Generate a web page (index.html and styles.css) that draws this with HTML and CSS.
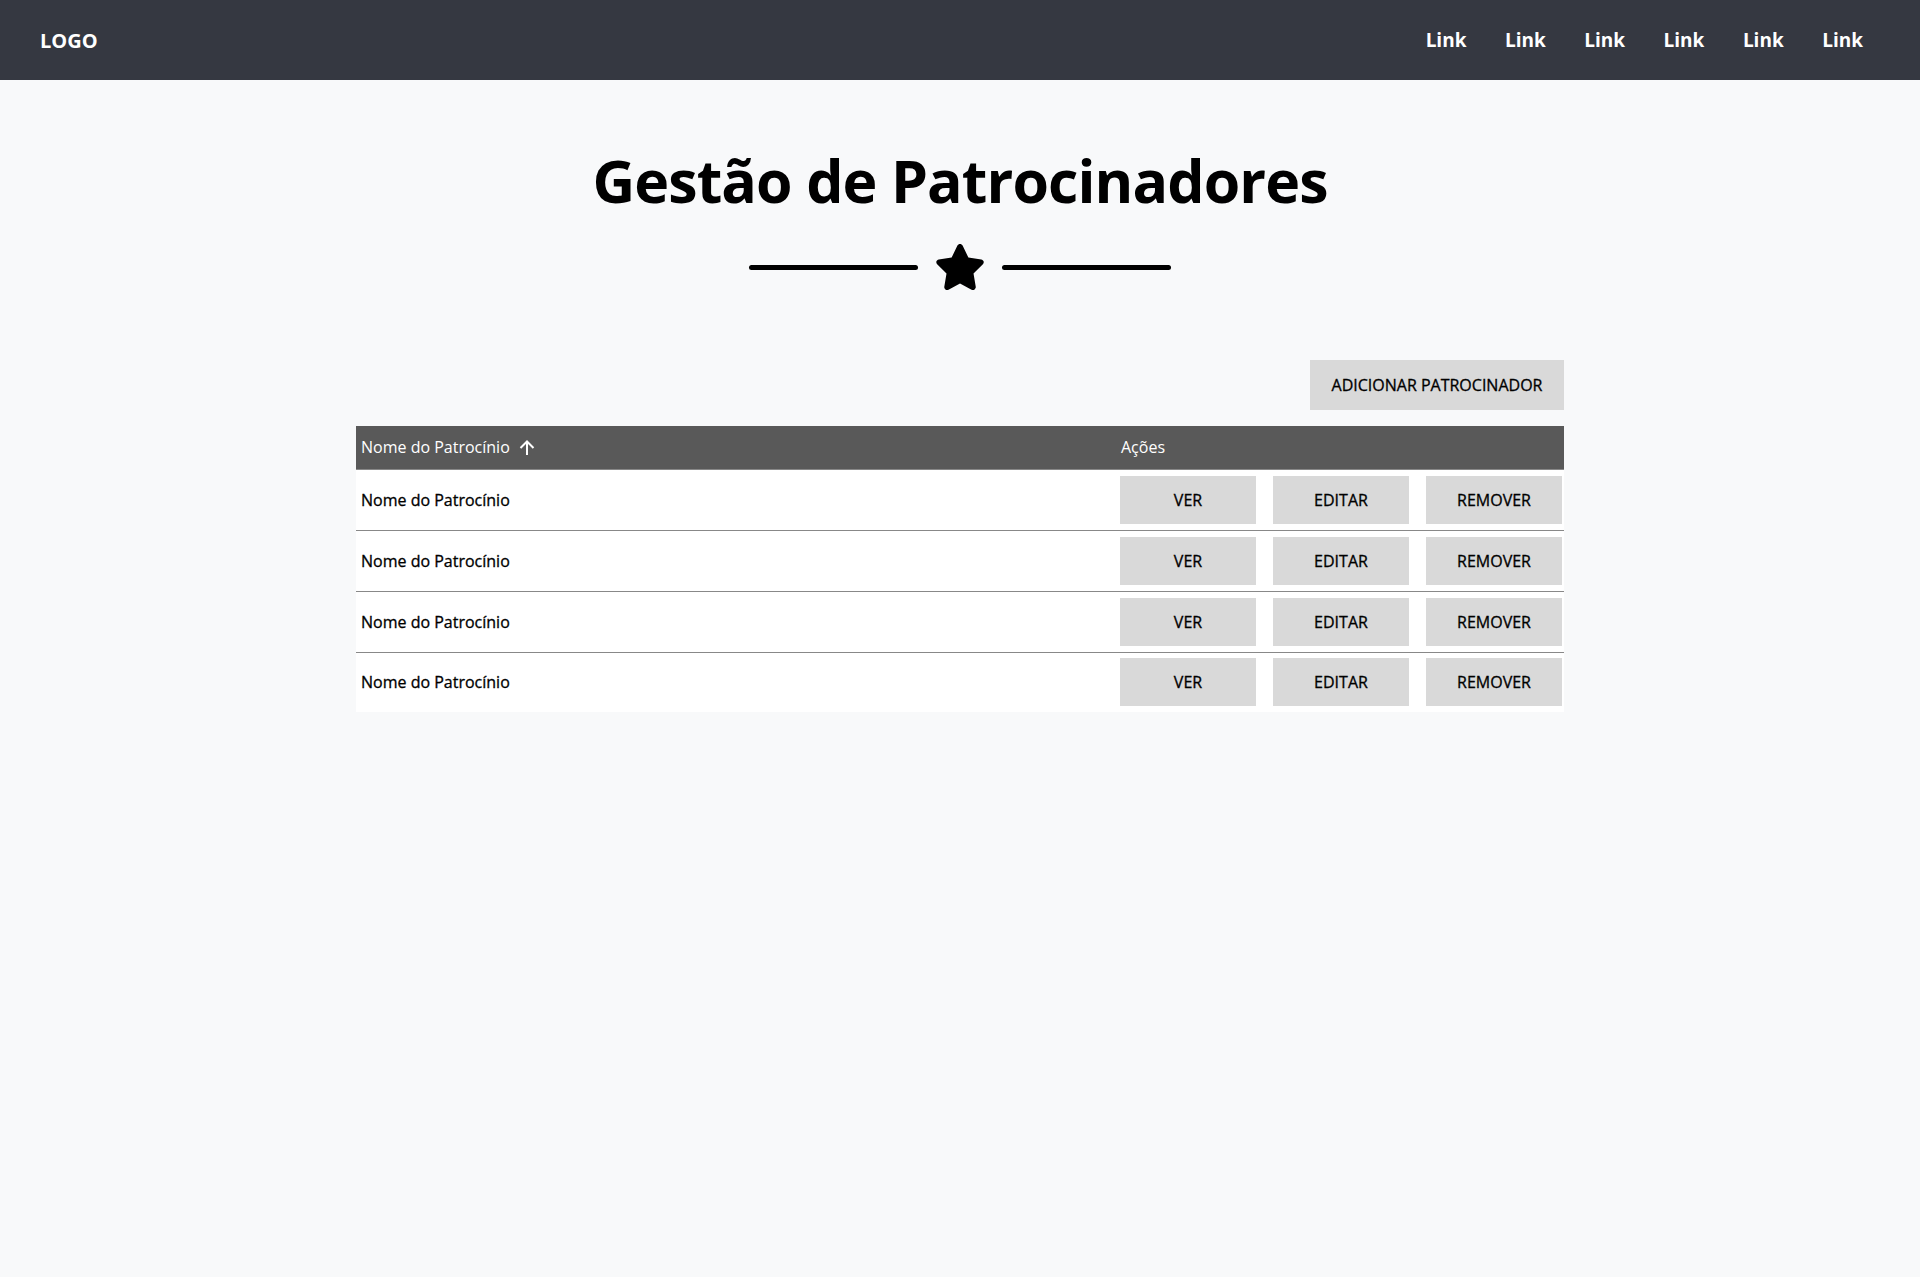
FILE: index.html
```html
<!DOCTYPE html>
<html lang="pt">
<head>
<meta charset="utf-8">
<title>Gestão de Patrocinadores</title>
<link rel="stylesheet" href="styles.css">
</head>
<body>
<nav class="navbar">
  <a class="logo" href="#">LOGO</a>
  <ul class="nav-links">
    <li><a href="#">Link</a></li>
    <li><a href="#">Link</a></li>
    <li><a href="#">Link</a></li>
    <li><a href="#">Link</a></li>
    <li><a href="#">Link</a></li>
    <li><a href="#">Link</a></li>
  </ul>
</nav>
<main class="content">
  <h1 class="title">Gestão de Patrocinadores</h1>
  <div class="divider">
    <span class="divider-line"></span>
    <svg class="star" viewBox="0 0 576 512" width="52" height="46" aria-hidden="true"><path d="M316.9 18C311.6 7 300.4 0 288.1 0s-23.4 7-28.8 18L195 150.3 51.4 171.5c-12 1.8-22 10.2-25.7 21.7s-.7 24.2 7.9 32.7L137.8 329 113.2 474.7c-2 12 3 24.2 12.9 31.3s23 8 33.8 2.3l128.3-68.5 128.3 68.5c10.8 5.7 23.9 4.9 33.8-2.3s14.9-19.3 12.9-31.3L438.5 329 542.7 225.9c8.6-8.5 11.7-21.2 7.9-32.7s-13.7-19.9-25.7-21.7L381.2 150.3 316.9 18z"/></svg>
    <span class="divider-line"></span>
  </div>
  <section class="panel">
    <div class="toolbar">
      <button class="btn btn-add">ADICIONAR PATROCINADOR</button>
    </div>
    <table class="sponsors">
      <thead>
        <tr>
          <th class="col-name"><span class="th-inner">Nome do Patrocínio
            <svg class="sort-icon" viewBox="0 0 16 15" width="16" height="15" aria-hidden="true"><path d="M8 15V1.5M1.5 8L8 1.5 14.5 8" fill="none" stroke="#fff" stroke-width="2"/></svg></span></th>
          <th class="col-actions">Ações</th>
        </tr>
      </thead>
      <tbody>
        <tr>
          <td class="name">Nome do Patrocínio</td>
          <td class="actions"><div class="action-group"><button class="btn">VER</button><button class="btn">EDITAR</button><button class="btn">REMOVER</button></div></td>
        </tr>
        <tr>
          <td class="name">Nome do Patrocínio</td>
          <td class="actions"><div class="action-group"><button class="btn">VER</button><button class="btn">EDITAR</button><button class="btn">REMOVER</button></div></td>
        </tr>
        <tr>
          <td class="name">Nome do Patrocínio</td>
          <td class="actions"><div class="action-group"><button class="btn">VER</button><button class="btn">EDITAR</button><button class="btn">REMOVER</button></div></td>
        </tr>
        <tr>
          <td class="name">Nome do Patrocínio</td>
          <td class="actions"><div class="action-group"><button class="btn">VER</button><button class="btn">EDITAR</button><button class="btn">REMOVER</button></div></td>
        </tr>
      </tbody>
    </table>
  </section>
</main>
</body>
</html>
```

FILE: styles.css
```css
* { box-sizing: border-box; }
html, body { margin: 0; padding: 0; }
body {
  background: #f8f9fa;
  font-family: "Open Sans", "Noto Sans", "DejaVu Sans", sans-serif;
  color: #000;
}
.navbar {
  height: 80px;
  background: #353841;
  display: flex;
  align-items: center;
  justify-content: space-between;
  padding: 0 57px 0 40px;
}
.logo {
  color: #fff;
  text-decoration: none;
  font-weight: 700;
  font-size: 20px;
}
.nav-links {
  list-style: none;
  margin: 0;
  padding: 0;
  display: flex;
  gap: 38.5px;
}
.nav-links a {
  color: #fff;
  text-decoration: none;
  font-weight: 700;
  font-size: 19px;
}
.content {
  display: flex;
  flex-direction: column;
  align-items: center;
}
.title {
  margin: 60px 0 0;
  font-size: 59px;
  line-height: 80px;
  font-weight: 700;
  letter-spacing: -0.9px;
}
.divider {
  margin-top: 24px;
  display: flex;
  align-items: center;
  gap: 16px;
}
.divider-line {
  width: 169px;
  height: 5px;
  border-radius: 3px;
  background: #000;
}
.star { display: block; }
.panel {
  width: 1208px;
  margin-top: 70px;
}
.toolbar {
  display: flex;
  justify-content: flex-end;
  margin-bottom: 16px;
}
.btn {
  border: none;
  background: #d9d9d9;
  font-family: inherit;
  font-size: 16px;
  font-weight: 500;
  -webkit-text-stroke: 0.3px #000;
  color: #000;
  cursor: pointer;
  padding: 0;
}
.btn-add {
  width: 254px;
  height: 50px;
}
.sponsors {
  width: 100%;
  border-collapse: collapse;
  background: #fff;
}
.sponsors thead tr {
  background: #595959;
  height: 43px;
  border-bottom: 1px solid #888;
}
.sponsors th {
  color: #fff;
  font-weight: 400;
  font-size: 16px;
  text-align: left;
  padding: 0 5px;
}
.th-inner {
  display: inline-flex;
  align-items: center;
  gap: 9px;
}
.sort-icon { display: block; }
.col-actions { width: 447px; }
.sponsors tbody tr { height: 61px; border-bottom: 1px solid #888; }
.sponsors tbody tr:last-child { border-bottom: none; height: 60px; }
.sponsors td {
  padding: 0 5px;
  font-size: 16px;
  font-weight: 500;
}
.sponsors td.name { -webkit-text-stroke: 0.3px #000; }
.sponsors td.actions { padding: 0 2px 0 4px; }
.action-group {
  display: flex;
  gap: 17px;
}
.action-group .btn {
  width: 136px;
  height: 48px;
}
```
